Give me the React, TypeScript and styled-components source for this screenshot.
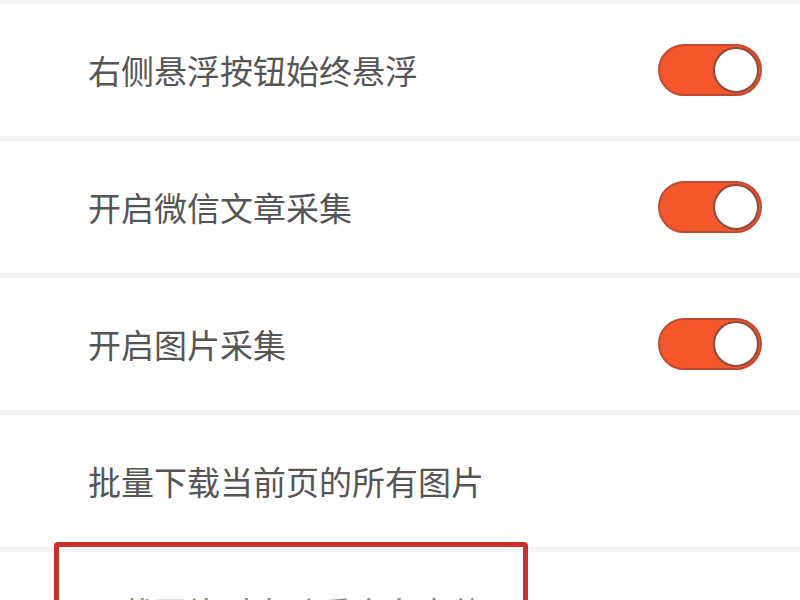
import React, { useState } from 'react';
import styled, { createGlobalStyle } from 'styled-components';

const GlobalStyle = createGlobalStyle`
  html, body {
    margin: 0;
    padding: 0;
    background: #fff;
    overflow: hidden;
  }
  body {
    font-family: "Noto Sans CJK SC", "Noto Sans", sans-serif;
  }
`;

const Page = styled.div`
  position: relative;
  height: 600px;
  overflow: hidden;
  background: #f4f4f4;
  padding-top: 4px;
  box-sizing: border-box;
  display: flex;
  flex-direction: column;
  gap: 5px;
`;

const Row = styled.div<{ $partial?: boolean }>`
  flex: none;
  height: 132px;
  box-sizing: border-box;
  background: #fff;
  display: flex;
  align-items: ${p => (p.$partial ? 'flex-start' : 'center')};
  justify-content: space-between;
  padding: ${p => (p.$partial ? '44px 38px 0 88px' : '0 38px 0 88px')};
`;

const Label = styled.span<{ $faint?: boolean }>`
  font-size: 33px;
  line-height: 1;
  color: ${p => (p.$faint ? '#8a8a8a' : '#555')};
`;

const Track = styled.button<{ $on: boolean }>`
  width: 104px;
  height: 52px;
  padding: 1px;
  box-sizing: border-box;
  border-radius: 26px;
  border: 2px solid ${p => (p.$on ? '#c04a34' : '#cfcfcf')};
  background: ${p => (p.$on ? '#f4572c' : '#e6e6e6')};
  display: flex;
  align-items: center;
  justify-content: ${p => (p.$on ? 'flex-end' : 'flex-start')};
  cursor: pointer;
`;

const Knob = styled.span`
  width: 46px;
  height: 46px;
  box-sizing: border-box;
  border-radius: 50%;
  background: #fff;
  border: 2px solid #8e4a3b;
`;

const Highlight = styled.div`
  position: absolute;
  left: 54px;
  top: 542px;
  width: 474px;
  height: 120px;
  box-sizing: border-box;
  border: 5px solid #c8302c;
  border-radius: 4px;
  pointer-events: none;
`;

const Switch = ({ initial }: { initial: boolean }) => {
  const [on, setOn] = useState(initial);
  return (
    <Track $on={on} onClick={() => setOn(!on)}>
      <Knob />
    </Track>
  );
};

const settings = [
  { label: '右侧悬浮按钮始终悬浮', toggle: true },
  { label: '开启微信文章采集', toggle: true },
  { label: '开启图片采集', toggle: true },
  { label: '批量下载当前页的所有图片', toggle: false },
  { label: '下载图片时自动重命名文件', toggle: false, partial: true },
];

const App = () => {
  return (
    <>
      <GlobalStyle />
      <Page>
        {settings.map(s => (
          <Row key={s.label} $partial={s.partial}>
            <Label $faint={s.partial}>{s.label}</Label>
            {s.toggle && <Switch initial />}
          </Row>
        ))}
        <Highlight />
      </Page>
    </>
  );
};

export default App;
